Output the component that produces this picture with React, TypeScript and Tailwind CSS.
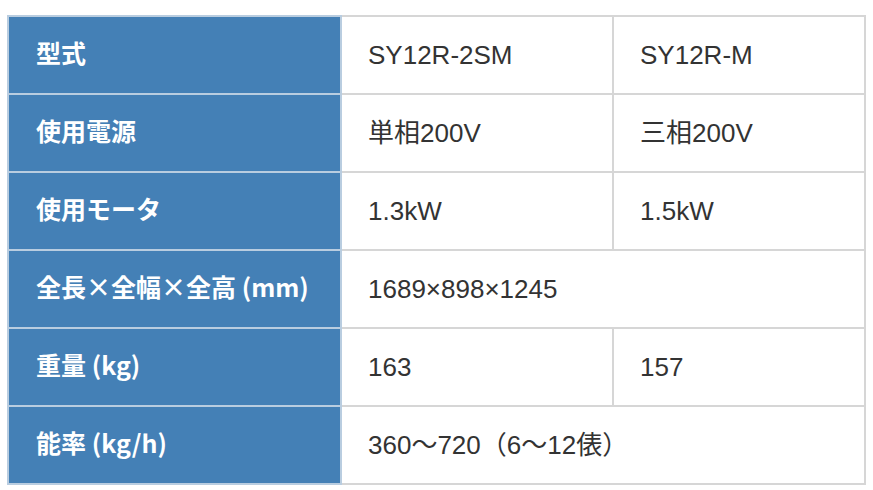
const rows: { label: string; values: string[] }[] = [
  { label: '型式', values: ['SY12R-2SM', 'SY12R-M'] },
  { label: '使用電源', values: ['単相200V', '三相200V'] },
  { label: '使用モータ', values: ['1.3kW', '1.5kW'] },
  { label: '全長×全幅×全高 (mm)', values: ['1689×898×1245'] },
  { label: '重量 (kg)', values: ['163', '157'] },
  { label: '能率 (kg/h)', values: ['360〜720（6〜12俵）'] },
];

export default function App() {
  return (
    <div
      className="w-[873px] h-[490px] bg-white pt-[15px] pl-[7px]"
      style={{ fontFamily: '"Liberation Sans", "Noto Sans CJK JP", sans-serif' }}
    >
      <table className="w-[857px] border-collapse table-fixed">
        <colgroup>
          <col className="w-[333px]" />
          <col className="w-[272px]" />
          <col className="w-[252px]" />
        </colgroup>
        <tbody>
          {rows.map((row) => (
            <tr key={row.label} className="h-[78px]">
              <th className="border-2 border-[#b9cde0] bg-[#4480b6] pl-[27px] pb-[5px] text-left align-middle font-['Noto_Sans_CJK_JP',sans-serif] text-[25px] font-bold leading-none text-white">
                {row.label}
              </th>
              {row.values.map((v) => (
                <td
                  key={v}
                  colSpan={row.values.length === 1 ? 2 : 1}
                  className="border-2 border-[#d6d6d6] pl-[26px] pb-[1px] align-middle text-[26px] leading-none text-[#333333]"
                >
                  {v}
                </td>
              ))}
            </tr>
          ))}
        </tbody>
      </table>
    </div>
  );
}
